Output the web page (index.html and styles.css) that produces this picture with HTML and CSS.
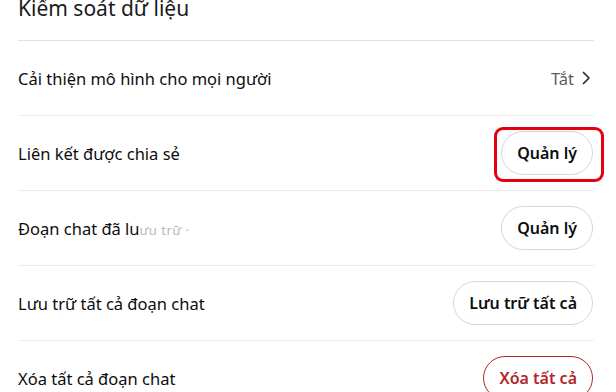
FILE: index.html
```html
<!DOCTYPE html>
<html lang="vi">
<head>
<meta charset="utf-8">
<title>Kiểm soát dữ liệu</title>
<link rel="stylesheet" href="styles.css">
</head>
<body>
<div class="panel">
  <h2 class="title">Kiểm soát dữ liệu</h2>
  <div class="row">
    <span class="label">Cải thiện mô hình cho mọi người</span>
    <span class="value">Tắt
      <svg class="chev" width="12" height="16" viewBox="0 0 12 16"><path d="M3.5 2.5 L9 8 L3.5 13.5" fill="none" stroke="#2a2a2a" stroke-width="1.7" stroke-linecap="round" stroke-linejoin="round"/></svg>
    </span>
  </div>
  <div class="row">
    <span class="label">Liên kết được chia sẻ</span>
    <span class="btn-wrap"><button class="btn">Quản lý</button><span class="highlight"></span></span>
  </div>
  <div class="row">
    <span class="label">Đoạn chat đã lu<span class="faded">ưu trữ ·</span></span>
    <button class="btn">Quản lý</button>
  </div>
  <div class="row">
    <span class="label">Lưu trữ tất cả đoạn chat</span>
    <button class="btn">Lưu trữ tất cả</button>
  </div>
  <div class="row">
    <span class="label">Xóa tất cả đoạn chat</span>
    <button class="btn danger">Xóa tất cả</button>
  </div>
</div>
</body>
</html>
```
FILE: styles.css
```css
html, body {
  margin: 0;
  padding: 0;
  background: #ffffff;
  overflow: hidden;
}
body {
  font-family: "Noto Sans", "Open Sans", sans-serif;
  color: #0d0d0d;
  width: 616px;
  height: 392px;
}
.panel {
  width: 576px;
  margin-left: 18px;
}
.title {
  margin: -3px 0 0 0;
  height: 44px;
  box-sizing: border-box;
  border-bottom: 1px solid #e3e3e3;
  font-size: 21px;
  font-weight: 400;
  line-height: 22px;
  color: #1a1a1a;
}
.row {
  display: flex;
  align-items: center;
  justify-content: space-between;
  height: 75px;
  box-sizing: border-box;
  border-bottom: 1px solid #ececec;
}
.label {
  font-size: 16.5px;
}
.faded {
  color: #8a8a8a;
  font-size: 13px;
  letter-spacing: 0.5px;
  opacity: 0.6;
}
.value {
  display: flex;
  align-items: center;
  gap: 6px;
  font-size: 16.5px;
  color: #5d5d5d;
  margin-right: 2px;
}
.chev { display: block; }
.btn-wrap {
  position: relative;
  display: flex;
}
.btn {
  font-family: inherit;
  font-size: 16px;
  font-weight: 600;
  color: #0d0d0d;
  background: #ffffff;
  border: 1px solid #d6d6d6;
  border-radius: 999px;
  height: 44px;
  padding: 0 15px;
  margin-right: 1px;
}
.danger {
  color: #b0262a;
  border-color: #b0262a;
}
.highlight {
  position: absolute;
  left: -7px;
  top: -4px;
  right: -10px;
  bottom: -7px;
  border: 3.5px solid #e5000f;
  border-radius: 9px;
}
```
